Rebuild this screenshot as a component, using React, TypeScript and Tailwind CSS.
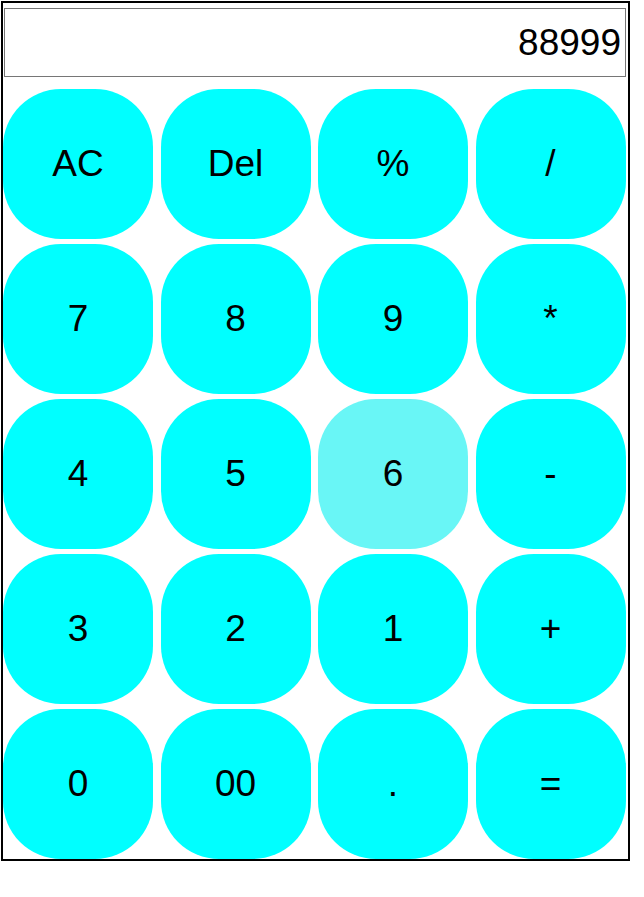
import { useState } from 'react';

const KEYS = ['AC', 'Del', '%', '/', '7', '8', '9', '*', '4', '5', '6', '-', '3', '2', '1', '+', '0', '00', '.', '='];

function CalcButton({ label, active }: { label: string; active: boolean }) {
    return (
        <button
            className={`w-[150px] h-[150px] rounded-[58px] text-[37px] text-black flex items-center justify-center ${
                active ? 'bg-[#69f6f6]' : 'bg-[#00ffff]'
            }`}
        >
            {label}
        </button>
    );
}

function App() {
    const [value] = useState('88999');

    return (
        <div className="ml-[1px] mt-[1px] w-[629px] h-[860px] border-2 border-black bg-white font-['Liberation_Sans',Arial,sans-serif]">
            <input
                readOnly
                value={value}
                className="block ml-[1px] mt-[5px] w-[622px] h-[69px] border border-[#767676] text-right pr-[4px] text-[37px] text-black outline-none"
            />
            <div className="grid grid-cols-[repeat(4,150px)] gap-x-[7.5px] gap-y-[5px] mt-[12px]">
                {KEYS.map((key) => (
                    <CalcButton key={key} label={key} active={key === '6'} />
                ))}
            </div>
        </div>
    );
}

export default App;
